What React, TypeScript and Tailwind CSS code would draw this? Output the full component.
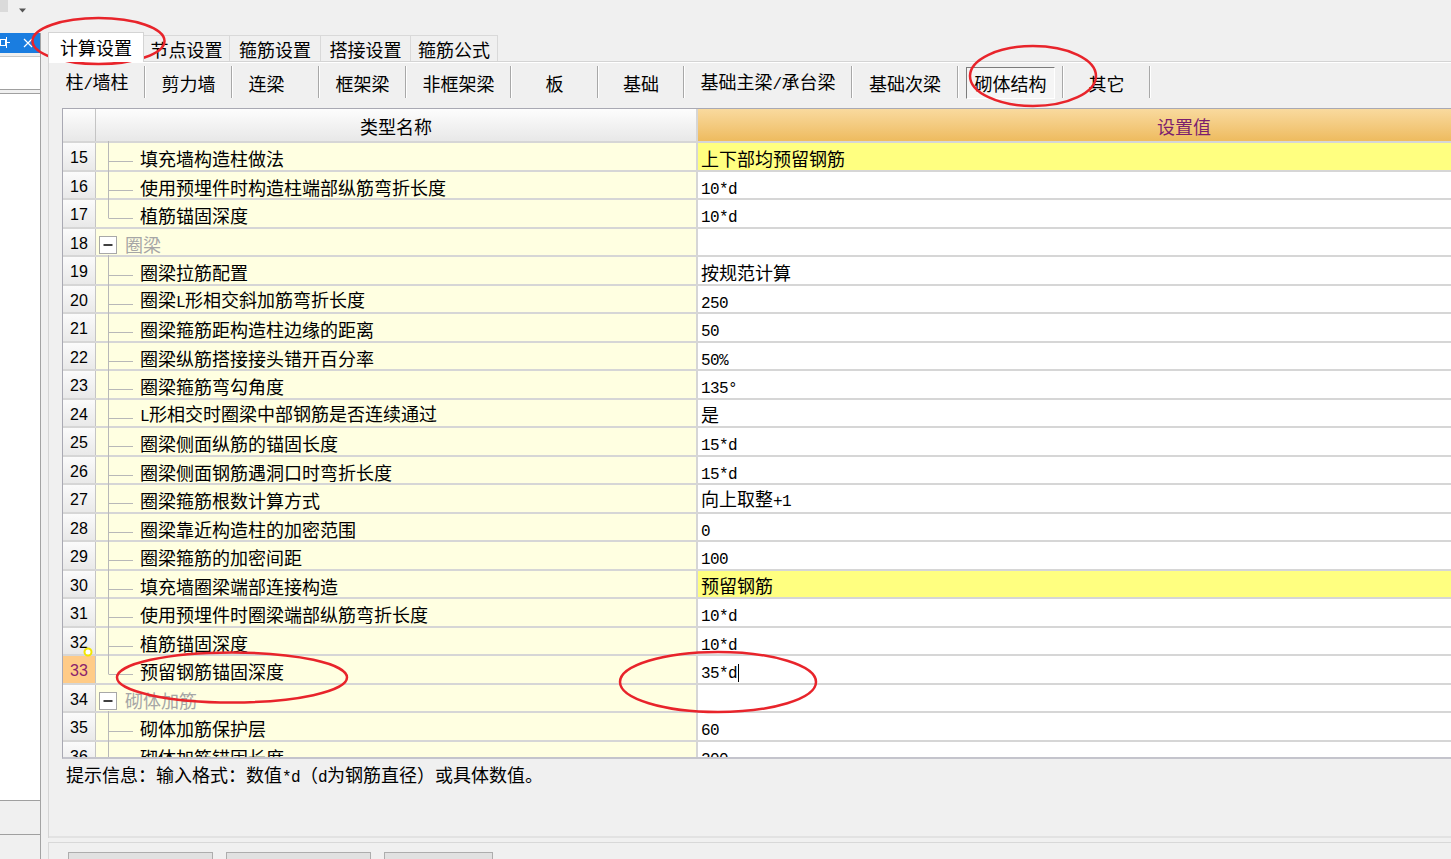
import React from 'react';

type Kind = 'mid' | 'last' | 'group';

interface Row {
  no: number;
  name: string;
  value: string;
  kind: Kind;
  hl?: boolean;
  cur?: boolean;
}

const rows: Row[] = [
  { no: 15, name: '填充墙构造柱做法', value: '上下部均预留钢筋', kind: 'mid', hl: true },
  { no: 16, name: '使用预埋件时构造柱端部纵筋弯折长度', value: '10*d', kind: 'mid' },
  { no: 17, name: '植筋锚固深度', value: '10*d', kind: 'last' },
  { no: 18, name: '圈梁', value: '', kind: 'group' },
  { no: 19, name: '圈梁拉筋配置', value: '按规范计算', kind: 'mid' },
  { no: 20, name: '圈梁L形相交斜加筋弯折长度', value: '250', kind: 'mid' },
  { no: 21, name: '圈梁箍筋距构造柱边缘的距离', value: '50', kind: 'mid' },
  { no: 22, name: '圈梁纵筋搭接接头错开百分率', value: '50%', kind: 'mid' },
  { no: 23, name: '圈梁箍筋弯勾角度', value: '135°', kind: 'mid' },
  { no: 24, name: 'L形相交时圈梁中部钢筋是否连续通过', value: '是', kind: 'mid' },
  { no: 25, name: '圈梁侧面纵筋的锚固长度', value: '15*d', kind: 'mid' },
  { no: 26, name: '圈梁侧面钢筋遇洞口时弯折长度', value: '15*d', kind: 'mid' },
  { no: 27, name: '圈梁箍筋根数计算方式', value: '向上取整+1', kind: 'mid' },
  { no: 28, name: '圈梁靠近构造柱的加密范围', value: '0', kind: 'mid' },
  { no: 29, name: '圈梁箍筋的加密间距', value: '100', kind: 'mid' },
  { no: 30, name: '填充墙圈梁端部连接构造', value: '预留钢筋', kind: 'mid', hl: true },
  { no: 31, name: '使用预埋件时圈梁端部纵筋弯折长度', value: '10*d', kind: 'mid' },
  { no: 32, name: '植筋锚固深度', value: '10*d', kind: 'mid' },
  { no: 33, name: '预留钢筋锚固深度', value: '35*d', kind: 'last', cur: true },
  { no: 34, name: '砌体加筋', value: '', kind: 'group' },
  { no: 35, name: '砌体加筋保护层', value: '60', kind: 'mid' },
  { no: 36, name: '砌体加筋锚固长度', value: '200', kind: 'mid' },
];

const topTabs = [
  { label: '计算设置', w: 'w-[96px]', active: true },
  { label: '节点设置', w: 'w-[86px]' },
  { label: '箍筋设置', w: 'w-[91px]' },
  { label: '搭接设置', w: 'w-[90px]' },
  { label: '箍筋公式', w: 'w-[87px]' },
];

const subTabs = [
  { label: '柱/墙柱', w: 'w-[96px]', pad: '' },
  { label: '剪力墙', w: 'w-[87px]', pad: '' },
  { label: '连梁', w: 'w-[87px]', pad: 'pr-[18px]' },
  { label: '框架梁', w: 'w-[87px]', pad: '' },
  { label: '非框架梁', w: 'w-[105px]', pad: '' },
  { label: '板', w: 'w-[87px]', pad: '' },
  { label: '基础', w: 'w-[86px]', pad: '' },
  { label: '基础主梁/承台梁', w: 'w-[168px]', pad: '' },
  { label: '基础次梁', w: 'w-[106px]', pad: '' },
  { label: '砌体结构', w: 'w-[105px]', pad: '', active: true },
  { label: '其它', w: 'w-[87px]', pad: '' },
];

const ascii = /^[\x20-\x7e°]+$/;

// half-width runs are drawn narrower, like the bitmap font of the original
function Mixed({ text, low = '' }: { text: string; low?: string }) {
  const parts = text.split(/([\x20-\x7e°]+)/).filter(Boolean);
  return (
    <>
      {parts.map((p, i) =>
        ascii.test(p) ? (
          <span
            key={i}
            className={`font-['Liberation_Mono',monospace] text-[16px] tracking-[-0.6px] ${low}`}
          >
            {p}
          </span>
        ) : (
          <span key={i}>{p}</span>
        )
      )}
    </>
  );
}

function Tree({ kind }: { kind: Kind }) {
  if (kind === 'group') {
    return (
      <svg width="29" height="27" className="shrink-0 overflow-visible">
        <rect x="3.5" y="7.5" width="17" height="17" fill="#fff" stroke="#a8a8a8" />
        <line x1="7.5" y1="16" x2="16.5" y2="16" stroke="#111" strokeWidth="1.6" />
      </svg>
    );
  }
  return (
    <svg width="44" height="27" className="shrink-0 overflow-visible">
      <line x1="12.5" y1="-2" x2="12.5" y2={kind === 'last' ? 18.5 : 29} stroke="#b8b8b8" />
      <line x1="13" y1="18.5" x2="37" y2="18.5" stroke="#b8b8b8" />
    </svg>
  );
}

function TableRow({ r }: { r: Row }) {
  const numCls = r.cur
    ? 'bg-[#ffcb87] text-[#8b1f6d]'
    : 'bg-linear-to-b from-[#fbfbfb] to-[#e9e9e9] text-black';
  const pure = ascii.test(r.value);
  return (
    <div className="flex h-[28.5px] shrink-0 border-b-2 border-[#d6d6d6]">
      <div
        className={`w-[33px] shrink-0 border-r border-[#c4c4c4] flex items-center justify-center pt-[4px] font-['Liberation_Sans',sans-serif] text-[16px] ${numCls}`}
      >
        {r.no}
      </div>
      <div className="w-[600px] shrink-0 bg-[#ffffe1] flex">
        <Tree kind={r.kind} />
        <span className={`self-center pt-[4px] whitespace-nowrap ${r.kind === 'group' ? 'text-[#a6a6a6]' : 'text-black'}`}>
          <Mixed text={r.name} />
        </span>
      </div>
      <div
        className={`w-[974px] shrink-0 border-l-2 border-[#d6d6d6] flex items-center pl-[3px] pt-[3px] whitespace-nowrap ${r.hl ? 'bg-[#ffff80]' : 'bg-white'}`}
      >
        <span>
          <Mixed text={r.value} low={pure ? 'align-[-3px]' : ''} />
        </span>
        {r.cur && <span className="w-px h-[18px] bg-black ml-px mt-[4px]" />}
      </div>
    </div>
  );
}

export default function App() {
  return (
    <div className="relative w-[1451px] h-[859px] overflow-hidden bg-[#f0f0f0] font-['Noto_Sans_CJK_SC',sans-serif] text-[18px] leading-[20px] text-black">
      {/* top strip */}
      <div className="h-[33px] flex items-start">
        <div className="w-[8px] h-[12px] bg-[#dadada]" />
        <svg width="20" height="33" className="shrink-0">
          <path d="M11 8.5 L18 8.5 L14.5 12.5 Z" fill="#555" />
        </svg>
      </div>

      <div className="flex h-[826px]">
        {/* left dock */}
        <div className="w-[41px] shrink-0 flex flex-col border-r border-[#a3a3a3]">
          <div className="h-[20px] bg-[#1a7de0] flex items-center justify-between pr-[7px]">
            <svg width="10" height="12" className="shrink-0">
              <rect x="0.5" y="2.5" width="5" height="6" fill="none" stroke="#fff" />
              <line x1="6.5" y1="0" x2="6.5" y2="11" stroke="#fff" />
              <line x1="7" y1="5.5" x2="10" y2="5.5" stroke="#fff" />
            </svg>
            <svg width="10" height="10" className="shrink-0">
              <path d="M1 1 L9 9 M9 1 L1 9" stroke="#fff" strokeWidth="1.2" />
            </svg>
          </div>
          <div className="h-[4px] border-b border-[#c8c8c8]" />
          <div className="h-[33px] bg-white border-b border-[#a0a0a0]" />
          <div className="h-[3px]" />
          <div className="h-[708px] bg-white border-y border-[#a0a0a0]" />
          <div className="h-[34px] border-b border-[#a0a0a0]" />
        </div>
        <div className="w-[7px] shrink-0" />

        {/* main */}
        <div className="flex-1 flex flex-col min-w-0">
          {/* top tabs */}
          <div className="h-[28px] flex items-end shrink-0">
            {topTabs.map((t) =>
              t.active ? (
                <div
                  key={t.label}
                  className={`${t.w} h-[30px] -mb-px z-10 bg-white border-x border-t border-[#d4d4d4] flex items-center justify-center pb-[2px]`}
                >
                  {t.label}
                </div>
              ) : (
                <div
                  key={t.label}
                  className={`${t.w} h-[26px] bg-[#f0f0f0] border-r border-t border-[#d9d9d9] flex items-center justify-center`}
                >
                  {t.label}
                </div>
              )
            )}
          </div>

          {/* panel */}
          <div className="h-[777px] shrink-0 flex flex-col border-l border-t border-[#d4d4d4] bg-[#f0f0f0]">
            <div className="h-px bg-white" />
            {/* sub tabs */}
            <div className="h-[37px] flex pl-px shrink-0">
              {subTabs.map((t) => (
                <div key={t.label} className={`${t.w} shrink-0 flex items-center`}>
                  <div className={`flex-1 h-full flex items-center justify-center pt-[2px] ${t.pad}`}>
                    {t.active ? (
                      <div className="w-[89px] h-[32px] border-t border-l border-[#7c7c7c] border-b border-r border-b-white border-r-white bg-[#f5f5f5] flex items-center justify-center">
                        {t.label}
                      </div>
                    ) : (
                      <span className="whitespace-nowrap">
                        <Mixed text={t.label} />
                      </span>
                    )}
                  </div>
                  <div className="w-[2px] h-[32px] border-l border-[#a8a8a8] border-r border-r-white" />
                </div>
              ))}
            </div>
            <div className="h-[8px] shrink-0" />

            {/* grid */}
            <div className="ml-[13px] h-[651px] shrink-0 overflow-hidden border-t border-l border-b-2 border-[#a9a9b3] border-b-[#c4c4cc] flex flex-col bg-white">
              <div className="flex h-[34px] shrink-0 border-b-2 border-[#d6d6d6]">
                <div className="w-[33px] shrink-0 border-r border-[#c4c4c4] bg-linear-to-b from-[#fdfdfd] to-[#e8e8e8]" />
                <div className="w-[600px] shrink-0 bg-linear-to-b from-[#fdfdfd] to-[#e8e8e8] flex items-center justify-center pt-[2px]">
                  类型名称
                </div>
                <div className="w-[974px] shrink-0 border-l-2 border-[#d6d6d6] bg-linear-to-b from-[#f9da9e] to-[#eebb5e] flex items-center justify-center pt-[2px] text-[#7b1e6e]">
                  设置值
                </div>
              </div>
              {rows.map((r) => (
                <TableRow key={r.no} r={r} />
              ))}
            </div>

            {/* hint */}
            <div className="flex-1 pl-[17px] pt-[5px] whitespace-nowrap border-b-2 border-[#e2e2e2]">
              提示信息：输入格式：数值<Mixed text="*d" />（<Mixed text="d" />为钢筋直径）或具体数值。
            </div>
          </div>

          {/* lower buttons */}
          <div className="mt-[4px] flex-1 border-l border-t border-[#d8d8d8] flex gap-[13px] pl-[19px] pt-[9px]">
            <div className="w-[145px] h-[20px] shrink-0 bg-[#e1e1e1] border border-[#adadad]" />
            <div className="w-[145px] h-[20px] shrink-0 bg-[#e1e1e1] border border-[#adadad]" />
            <div className="w-[109px] h-[20px] shrink-0 bg-[#e1e1e1] border border-[#adadad]" />
          </div>
        </div>
      </div>

      {/* annotations drawn over the screenshot */}
      <svg className="absolute inset-0 pointer-events-none" width="1451" height="859">
        <ellipse cx="98.5" cy="41" rx="66" ry="23" fill="none" stroke="#e8242b" strokeWidth="2.5" />
        <ellipse cx="1033" cy="76" rx="63" ry="30" fill="none" stroke="#e8242b" strokeWidth="2.5" />
        <ellipse cx="232" cy="677.5" rx="115" ry="25" fill="none" stroke="#e8242b" strokeWidth="2.5" />
        <ellipse cx="718" cy="682" rx="98" ry="30" fill="none" stroke="#e8242b" strokeWidth="2.5" />
        <circle cx="88" cy="652" r="3.5" fill="#fff" stroke="#f2e600" strokeWidth="2" />
      </svg>
    </div>
  );
}
